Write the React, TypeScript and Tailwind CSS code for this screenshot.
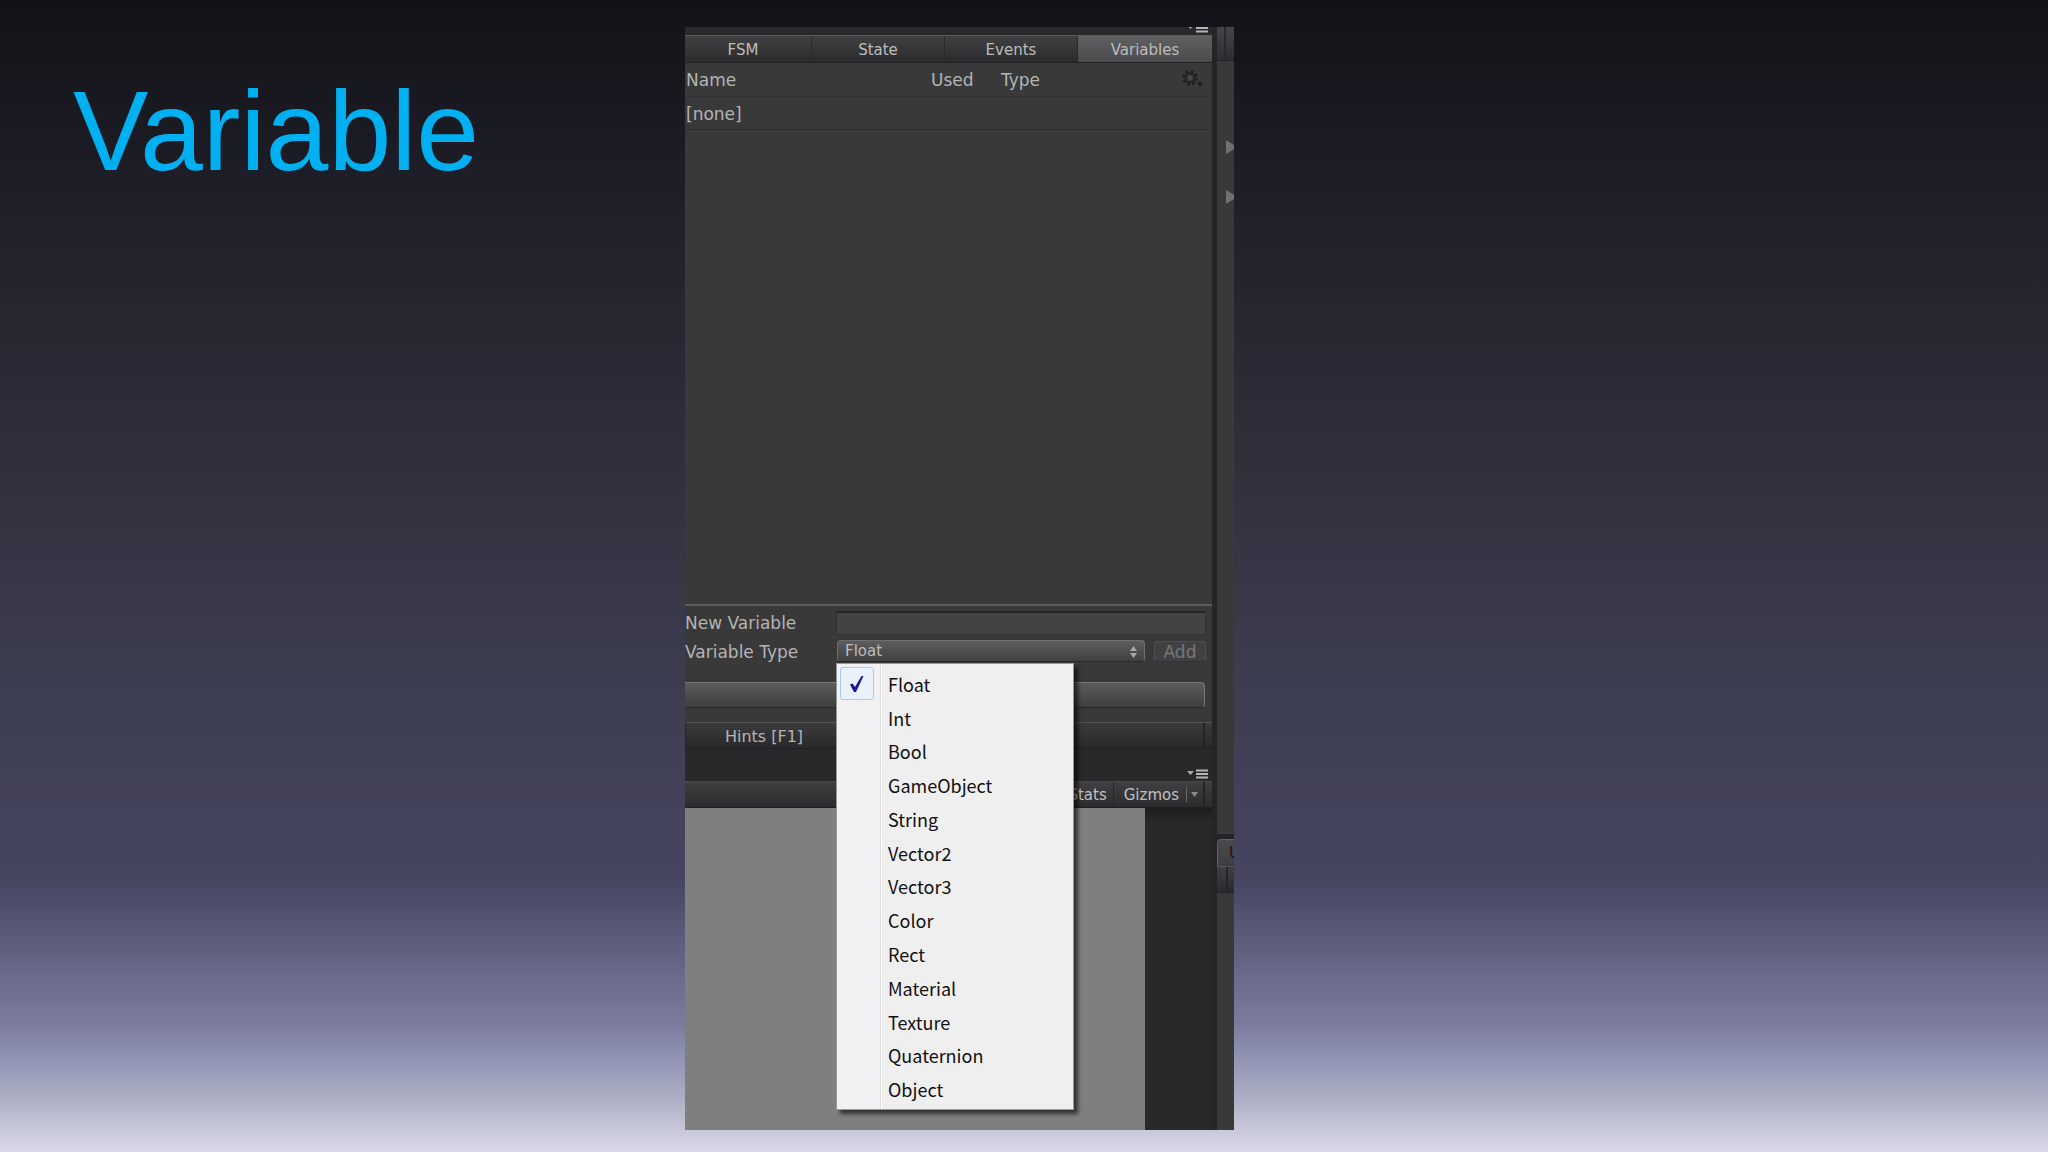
import React from "react";

const tabs = ["FSM", "State", "Events", "Variables"];

const variableTypes = [
  "Float",
  "Int",
  "Bool",
  "GameObject",
  "String",
  "Vector2",
  "Vector3",
  "Color",
  "Rect",
  "Material",
  "Texture",
  "Quaternion",
  "Object",
];

function PaneMenuIcon() {
  return (
    <svg width="22" height="10" viewBox="0 0 22 10" aria-hidden="true">
      <path d="M0 2h7L3.500 6z" fill="#a9a9a9" />
      <path d="M9 1.500h12M9 5h12M9 8.500h12" stroke="#b4b4b4" strokeWidth="2" />
    </svg>
  );
}

function GearIcon() {
  return (
    <svg width="22" height="18" viewBox="0 0 22 18" aria-hidden="true">
      <circle cx="8" cy="8" r="6.500" fill="none" stroke="#1d1d1f" strokeWidth="2.500" strokeDasharray="2.500 2.600" />
      <circle cx="8" cy="8" r="4.500" fill="none" stroke="#232325" strokeWidth="2" />
      <circle cx="8" cy="8" r="2" fill="#4c4c4e" />
      <path d="M15.500 13h5L18 16zM18 11v3" fill="#1d1d1f" stroke="#1d1d1f" />
    </svg>
  );
}

function Tabs() {
  return (
    <div role="tablist" className="grid h-[28px] shrink-0 grid-cols-[127fr_133fr_133fr_134fr] border-t border-[#5a5a5c] border-b border-b-[#202022] text-[15px]">
      {tabs.map((tab, i) => (
        <button
          key={tab}
          role="tab"
          aria-selected={tab === "Variables"}
          className={
            tab === "Variables"
              ? "bg-linear-to-b from-[#606062] to-[#4b4b4d] pt-[2px] text-[#bcbcbc]"
              : i === 0
                ? "border-r border-[#2a2a2c] bg-linear-to-b from-[#414143] to-[#2b2b2d] pt-[2px] pr-[10px] text-[#bcbcbc]"
                : "border-r border-[#2a2a2c] bg-linear-to-b from-[#414143] to-[#2b2b2d] pt-[2px] text-[#bcbcbc]"
          }
        >
          {tab}
        </button>
      ))}
    </div>
  );
}

function VariablesTable() {
  return (
    <table className="mr-[4px] table-fixed text-left text-[17px] leading-6">
      <colgroup>
        <col />
        <col className="w-[70px]" />
        <col className="w-[181px]" />
        <col className="w-[26px]" />
      </colgroup>
      <thead>
        <tr className="h-[33px] border-b border-[#303032]">
          <th className="pt-[2px] pl-px font-normal">Name</th>
          <th className="pt-[2px] font-normal">Used</th>
          <th className="pt-[2px] font-normal">Type</th>
          <th className="font-normal">
            <button aria-label="Settings" className="block">
              <GearIcon />
            </button>
          </th>
        </tr>
      </thead>
      <tbody>
        <tr className="h-[33px] border-b border-[#2b2b2d]">
          <td colSpan={4} className="pt-[2px] pl-px">
            [none]
          </td>
        </tr>
      </tbody>
    </table>
  );
}

function TypeMenu() {
  return (
    <ul
      role="listbox"
      aria-label="Variable types"
      className="absolute top-[23px] -left-px z-10 flex h-[447px] w-[238px] flex-col border border-[#98989a] bg-[linear-gradient(to_right,#f1f1f3_43px,#dcdcde_43px,#dcdcde_44px,#ffffff_44px,#ffffff_45px,#f0eff0_45px)] p-[3px] font-['Noto_Sans_CJK_KR',sans-serif] text-[18px] text-[#111111] shadow-[4px_4px_4px_rgba(0,0,0,0.6)]"
    >
      {variableTypes.map((type) => (
        <li key={type} role="option" aria-selected={type === "Float"} className="flex min-h-0 flex-1 items-center">
          <span
            className={
              type === "Float"
                ? "flex h-[33px] w-[34px] items-center justify-center rounded-[3px] border border-[#a5cbf8] bg-[#e9f1fb]"
                : "w-[34px]"
            }
          >
            {type === "Float" && (
              <svg width="14" height="16" viewBox="0 0 14 16" aria-hidden="true">
                <path d="M0 8.500 2.500 7.500 5 11 11.500 0H13.500L6 16H4z" fill="#1c1699" />
              </svg>
            )}
          </span>
          <span className="pl-[14px] leading-6">{type}</span>
        </li>
      ))}
    </ul>
  );
}

function NewVariableForm() {
  return (
    <form className="grid grid-cols-[151px_minmax(0,1fr)] gap-y-[5px] border-t-2 border-[#5c5c5e] pt-[5px] pr-[6px] text-[17px] leading-6">
      <label htmlFor="new-variable">New Variable</label>
      <input
        id="new-variable"
        type="text"
        className="h-[24px] border border-[#323234] border-t-2 border-t-[#252527] bg-[#434344] px-2 outline-none"
      />
      <label htmlFor="variable-type">Variable Type</label>
      <div className="flex items-start gap-[9px] pl-px">
        <div className="relative flex-1">
          <select
            id="variable-type"
            defaultValue="Float"
            className="block h-[22px] w-full appearance-none rounded-[4px] border border-[#707072] border-b-[#29292b] bg-linear-to-b from-[#5e5e60] to-[#404042] pl-[7px] text-[15px] leading-5 text-[#bdbdbd] outline-none"
          >
            {variableTypes.map((type) => (
              <option key={type}>{type}</option>
            ))}
          </select>
          <svg className="pointer-events-none absolute top-[6px] right-[8px]" width="7" height="12" viewBox="0 0 7 12" aria-hidden="true">
            <path d="M0 5 3.500 0 7 5zM0 7h7L3.500 12z" fill="#a8a8aa" />
          </svg>
          <TypeMenu />
        </div>
        <button
          type="button"
          disabled
          className="mt-px h-[21px] w-[52px] rounded-[4px] border border-[#4f4f51] border-b-[#333335] bg-[#414143] leading-5 text-[#777779]"
        >
          Add
        </button>
      </div>
    </form>
  );
}

function EditorPane() {
  return (
    <section className="flex min-w-0 flex-1 flex-col">
      <div className="flex h-[8px] shrink-0 items-end justify-end overflow-hidden bg-[#29292b] pr-[3px] pb-[2px]">
        <PaneMenuIcon />
      </div>
      <div className="flex h-[687px] flex-col bg-[#39393a]">
        <Tabs />
        <VariablesTable />
        <div className="mt-auto">
          <NewVariableForm />
          <button
            aria-label="Edit global variables"
            className="mt-[18px] mb-[14px] block h-[26px] w-[calc(100%-7px)] rounded-r-[4px] border border-l-0 border-[#77777a] border-b-[#29292b] bg-linear-to-b from-[#5c5c5e] to-[#3f3f41]"
          />
        </div>
      </div>
      <div className="flex h-[27px] shrink-0 items-stretch border-t border-b border-l border-t-[#525254] border-b-[#1f1f21] border-l-[#252527] bg-linear-to-b from-[#3b3b3d] to-[#29292b] text-[16px]">
        <button className="w-[156px] pt-[2px]">Hints [F1]</button>
        <span className="mr-[7px] ml-auto border-l-2 border-[#242426]" />
      </div>
      <div className="flex h-[32px] shrink-0 items-end justify-end bg-[#29292b] pr-[3px] pb-[2px]">
        <PaneMenuIcon />
      </div>
      <div className="flex h-[27px] shrink-0 items-stretch justify-end border-t border-b border-t-[#474749] border-b-[#1f1f21] bg-linear-to-b from-[#404042] to-[#2c2c2e] pr-[7px] text-[15px] text-[#c0c0c0]">
        <button className="border-r border-[#272729] pt-px pr-[6px]">Stats</button>
        <button className="pt-px pr-[7px] pl-[10px]">Gizmos</button>
        <button aria-label="Gizmos options" className="flex items-center border-r-2 border-[#242426] pr-[5px]">
          <span className="mr-[4px] h-[15px] w-px bg-[#68686a]" />
          <svg width="7" height="5" viewBox="0 0 7 5" aria-hidden="true">
            <path d="M0 0h7L3.500 5z" fill="#8c8c8e" />
          </svg>
        </button>
      </div>
      <div className="flex flex-1 bg-[#29292b]">
        <div className="flex-1 bg-[#7f7f80]" />
        <div className="w-[67px] bg-linear-to-b from-[#1c1c1e] to-[#29292b] to-[14px]" />
      </div>
    </section>
  );
}

function FoldoutArrow() {
  return (
    <svg className="ml-auto block" width="8" height="14" viewBox="0 0 8 14" aria-hidden="true">
      <path d="M0 0 8 5V9L0 14z" fill="#717173" />
    </svg>
  );
}

function SidePane() {
  return (
    <aside className="flex w-[22px] shrink-0 flex-col overflow-hidden border-l-[5px] border-[#252527] bg-[#39393a]">
      <div className="h-[34px] shrink-0 border-b border-[#232325] bg-linear-to-b from-[#464648] to-[#2d2d2f] pl-[7px]">
        <div className="h-full border-l-2 border-[#29292b]" />
      </div>
      <div className="flex h-[773px] shrink-0 flex-col gap-[36px] pt-[79px]">
        <FoldoutArrow />
        <FoldoutArrow />
      </div>
      <div className="h-[5px] shrink-0 bg-[#242426]" />
      <button className="h-[27px] shrink-0 overflow-hidden rounded-tl-[5px] border-t border-l border-[#626264] bg-linear-to-b from-[#4a4a4c] to-[#3d3d3f] pl-[11px] text-left text-[15px] text-[#161618]">
        U
      </button>
      <div className="h-[27px] shrink-0 border-t border-b border-t-[#565658] border-b-[#232325] bg-linear-to-b from-[#404042] to-[#2b2b2d] pl-[9px]">
        <div className="h-full border-l-2 border-[#252527]" />
      </div>
    </aside>
  );
}

export default function App() {
  return (
    <main className="grid min-h-screen grid-cols-[685fr_549fr_814fr] bg-[linear-gradient(to_bottom,#131217_0%,#1e1e29_16%,#2e2d39_37%,#3b3c4e_57%,#464560_76%,#4b4d68_78%,#6b6c8c_85%,#7b7c9f_89%,#8b8daf_91%,#a9acc2_95%,#c6c7d9_98%,#dad9e6_100%)] pt-[27px] pb-[22px]">
      <h1 className="pt-[40px] pl-[73px] font-['Liberation_Sans',sans-serif] text-[113px] leading-[128px] text-[#00b0f0]">
        Variable
      </h1>
      <div className="flex min-w-0 font-['DejaVu_Sans',sans-serif] text-[#b4b4b4]">
        <EditorPane />
        <SidePane />
      </div>
    </main>
  );
}
